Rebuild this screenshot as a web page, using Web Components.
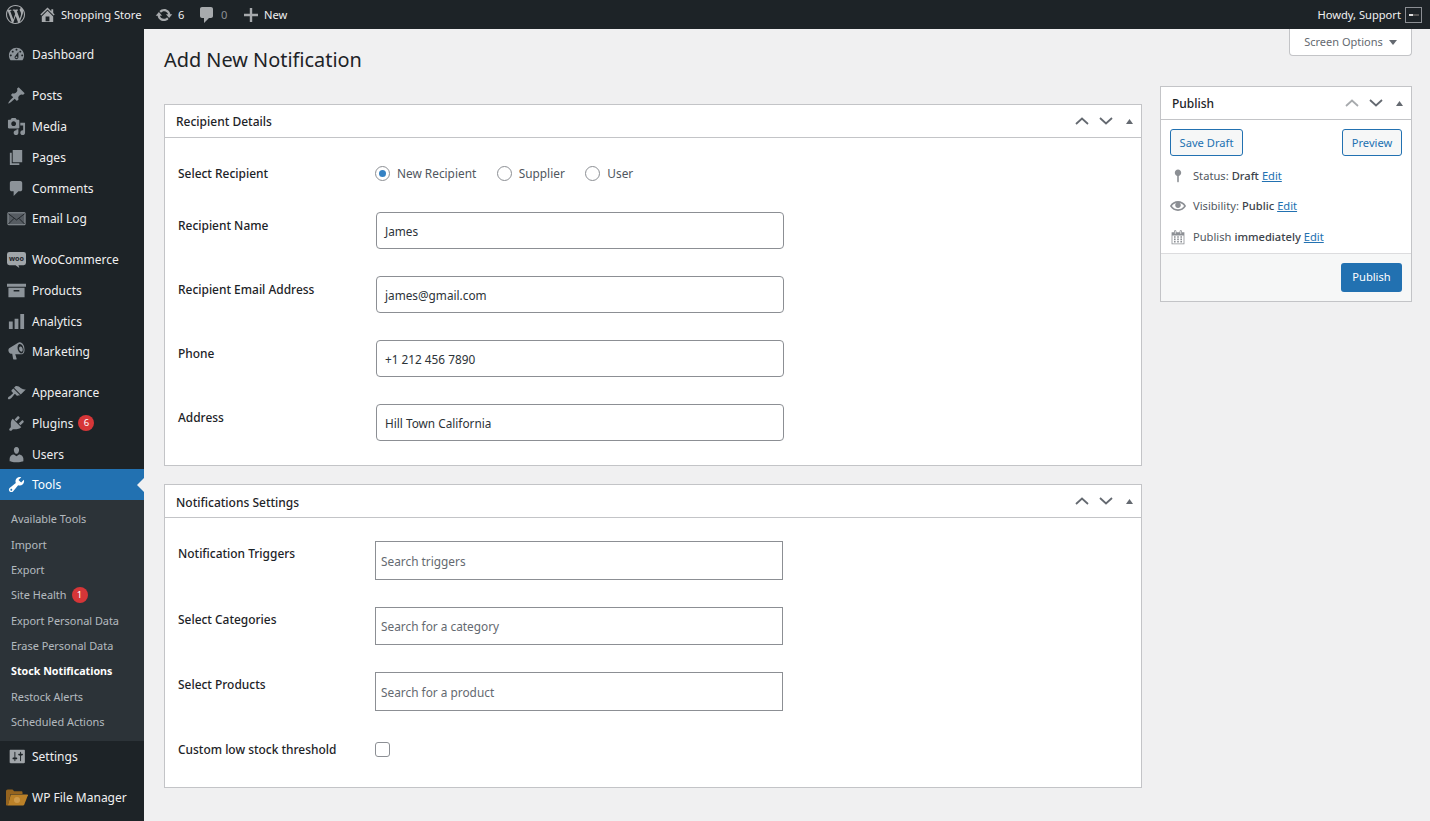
<!DOCTYPE html>
<html lang="en">
<head>
<meta charset="utf-8">
<title>Add New Notification</title>
<style>
  html, body { margin: 0; padding: 0; background: #f0f0f1; }
  body { font: 12px/18px "Noto Sans", "Open Sans", sans-serif; color: #1d2327; height: 821px; overflow: hidden; }
</style>
</head>
<body>
<wp-admin-shell>
  <wp-admin-bar slot="bar"></wp-admin-bar>
  <wp-side-menu slot="menu">
    <wp-menu-item icon="dashboard">Dashboard</wp-menu-item>
    <wp-menu-sep></wp-menu-sep>
    <wp-menu-item icon="post">Posts</wp-menu-item>
    <wp-menu-item icon="media">Media</wp-menu-item>
    <wp-menu-item icon="page">Pages</wp-menu-item>
    <wp-menu-item icon="comment">Comments</wp-menu-item>
    <wp-menu-item icon="email">Email Log</wp-menu-item>
    <wp-menu-sep></wp-menu-sep>
    <wp-menu-item icon="woo">WooCommerce</wp-menu-item>
    <wp-menu-item icon="archive">Products</wp-menu-item>
    <wp-menu-item icon="bars">Analytics</wp-menu-item>
    <wp-menu-item icon="megaphone">Marketing</wp-menu-item>
    <wp-menu-sep></wp-menu-sep>
    <wp-menu-item icon="brush">Appearance</wp-menu-item>
    <wp-menu-item icon="plugin" badge="6">Plugins</wp-menu-item>
    <wp-menu-item icon="users">Users</wp-menu-item>
    <wp-menu-item icon="wrench" current>Tools</wp-menu-item>
    <wp-sub-menu>
      <wp-sub-item>Available Tools</wp-sub-item>
      <wp-sub-item>Import</wp-sub-item>
      <wp-sub-item>Export</wp-sub-item>
      <wp-sub-item badge="1">Site Health</wp-sub-item>
      <wp-sub-item>Export Personal Data</wp-sub-item>
      <wp-sub-item>Erase Personal Data</wp-sub-item>
      <wp-sub-item current>Stock Notifications</wp-sub-item>
      <wp-sub-item>Restock Alerts</wp-sub-item>
      <wp-sub-item>Scheduled Actions</wp-sub-item>
    </wp-sub-menu>
    <wp-menu-item icon="settings">Settings</wp-menu-item>
    <wp-menu-sep></wp-menu-sep>
    <wp-menu-item icon="folder">WP File Manager</wp-menu-item>
  </wp-side-menu>

  <wp-page-title slot="title">Add New Notification</wp-page-title>

  <wp-meta-box slot="left" heading="Recipient Details" top="26" bottom="24">
    <wp-form-row label="Select Recipient" kind="radio">
      <wp-radio checked>New Recipient</wp-radio>
      <wp-radio>Supplier</wp-radio>
      <wp-radio>User</wp-radio>
    </wp-form-row>
    <wp-form-row label="Recipient Name"><wp-text-field>James</wp-text-field></wp-form-row>
    <wp-form-row label="Recipient Email Address"><wp-text-field>james@gmail.com</wp-text-field></wp-form-row>
    <wp-form-row label="Phone"><wp-text-field>+1 212 456 7890</wp-text-field></wp-form-row>
    <wp-form-row label="Address"><wp-text-field>Hill Town California</wp-text-field></wp-form-row>
  </wp-meta-box>

  <wp-meta-box slot="left" heading="Notifications Settings" top="23" bottom="28" lift="3">
    <wp-form-row label="Notification Triggers" kind="search"><wp-search-field>Search triggers</wp-search-field></wp-form-row>
    <wp-form-row label="Select Categories" kind="search"><wp-search-field>Search for a category</wp-search-field></wp-form-row>
    <wp-form-row label="Select Products" kind="search"><wp-search-field>Search for a product</wp-search-field></wp-form-row>
    <wp-form-row label="Custom low stock threshold" kind="check"><wp-check-box></wp-check-box></wp-form-row>
  </wp-meta-box>

  <wp-screen-options slot="right"></wp-screen-options>
  <wp-publish-box slot="right"></wp-publish-box>
</wp-admin-shell>

<script>
const ICONS = {
  logo: '<path d="M20 10c0-5.51-4.49-10-10-10C4.48 0 0 4.49 0 10c0 5.52 4.48 10 10 10 5.51 0 10-4.48 10-10zM7.78 15.37L4.37 6.22c.55-.02 1.17-.08 1.17-.08.5-.06.44-1.13-.06-1.11 0 0-1.45.11-2.37.11-.18 0-.37 0-.58-.01C4.12 2.69 6.87 1.11 10 1.11c2.33 0 4.45.87 6.05 2.34-.68-.11-1.65.39-1.65 1.58 0 .74.45 1.36.9 2.1.35.61.55 1.36.55 2.46 0 1.49-1.4 5-1.4 5l-3.03-8.37c.54-.02.82-.17.82-.17.5-.05.44-1.25-.06-1.22 0 0-1.44.12-2.38.12-.87 0-2.33-.12-2.33-.12-.5-.03-.56 1.2-.06 1.22l.92.08 1.26 3.41zM17.41 10c.24-.64.74-1.87.43-4.25.7 1.29 1.05 2.71 1.05 4.25 0 3.29-1.73 6.24-4.4 7.78.97-2.59 1.94-5.2 2.92-7.78zM6.1 18.09C3.12 16.65 1.11 13.53 1.11 10c0-1.3.23-2.48.72-3.59C3.25 10.3 4.67 14.2 6.1 18.09zm4.03-6.63l2.58 6.98c-.86.29-1.76.45-2.71.45-.79 0-1.57-.11-2.29-.33.81-2.38 1.62-4.74 2.42-7.1z"/>',
  home: '<path d="M16 8.5l1.53 1.53-1.06 1.06L10 4.62l-6.47 6.47-1.06-1.06L10 2.5l4 4v-2h2v4zm-6-2.46l6 5.99V18H4v-5.97zM12 17v-5H8v5h4z"/>',
  update: '<path d="M10.2 3.28c3.53 0 6.43 2.61 6.92 6h2.08l-3.5 4-3.5-4h2.32c-.45-1.97-2.21-3.45-4.32-3.45-1.45 0-2.73.71-3.54 1.78L4.95 5.66C6.23 4.2 8.11 3.28 10.2 3.28zm-.4 13.44c-3.52 0-6.43-2.61-6.92-6H.8l3.5-4c1.17 1.33 2.33 2.67 3.5 4H5.48c.45 1.97 2.21 3.45 4.32 3.45 1.45 0 2.73-.71 3.54-1.78l1.71 1.95c-1.28 1.46-3.15 2.38-5.25 2.38z"/>',
  plus: '<path d="M11.2 3v5.8H17v2.4h-5.8V17H8.8v-5.8H3V8.8h5.8V3z"/>',
  dashboard: '<path d="M3.76 16h12.48c1.1-1.37 1.76-3.11 1.76-5 0-4.42-3.58-8-8-8s-8 3.58-8 8c0 1.89.66 3.63 1.76 5zM10 4c.55 0 1 .45 1 1s-.45 1-1 1-1-.45-1-1 .45-1 1-1zM6 6c.55 0 1 .45 1 1s-.45 1-1 1-1-.45-1-1 .45-1 1-1zm8 0c.55 0 1 .45 1 1s-.45 1-1 1-1-.45-1-1 .45-1 1-1zm-5.37 5.55L12 7v6c0 1.1-.9 2-2 2s-2-.9-2-2c0-.57.24-1.08.63-1.45zM4 10c.55 0 1 .45 1 1s-.45 1-1 1-1-.45-1-1 .45-1 1-1zm12 0c.55 0 1 .45 1 1s-.45 1-1 1-1-.45-1-1 .45-1 1-1zm-5 3c0-.55-.45-1-1-1s-1 .45-1 1 .45 1 1 1 1-.45 1-1z"/>',
  post: '<path d="M10.44 3.02l1.82-1.82 6.36 6.35-1.83 1.82c-1.05-.68-2.48-.57-3.41.36l-.75.75c-.92.93-1.04 2.35-.35 3.41l-1.83 1.82-2.41-2.41-2.8 2.79c-.42.42-3.38 2.71-3.8 2.29s1.86-3.39 2.28-3.81l2.79-2.79L4.1 9.36l1.83-1.82c1.05.69 2.48.57 3.4-.36l.75-.75c.93-.92 1.05-2.35.36-3.41z"/>',
  media: '<path d="M13 11V4c0-.55-.45-1-1-1h-1.67L9 1H5L3.67 3H2c-.55 0-1 .45-1 1v7c0 .55.45 1 1 1h10c.55 0 1-.45 1-1zM7 4.5c1.38 0 2.5 1.12 2.5 2.5S8.38 9.5 7 9.5 4.5 8.38 4.5 7 5.62 4.5 7 4.5zM14 6h5v10.5c0 1.38-1.12 2.5-2.5 2.5S14 17.88 14 16.5s1.12-2.5 2.5-2.5c.17 0 .34.02.5.05V9h-3V6zm-4 8.05V13h2v3.5c0 1.38-1.12 2.5-2.5 2.5S7 17.88 7 16.5 8.12 14 9.5 14c.17 0 .34.02.5.05z"/>',
  page: '<path d="M6 15V2h10v13H6zm-1 1h8v2H3V5h2v11z"/>',
  comment: '<path d="M5 2h9c1.1 0 2 .9 2 2v7c0 1.1-.9 2-2 2h-2l-5 5v-5H5c-1.1 0-2-.9-2-2V4c0-1.1.9-2 2-2z"/>',
  email: '<rect x="1" y="4" width="18" height="12.500" rx=".8" fill="#565c62" stroke="#8f959a" stroke-width="1.100"/><path d="M1.500 5l8.500 6.500L18.500 5M1.500 15.800L7.500 9.800M18.500 15.800L12.500 9.800" fill="none" stroke="#1d2327" stroke-width="1"/>',
  woo: '<path fill="#a0a5a9" d="M2.500 2h15A2.500 2.500 0 0 1 20 4.500v9a2.500 2.500 0 0 1-2.500 2.500H12l1 3-4-3H2.500A2.500 2.500 0 0 1 0 13.500v-9A2.500 2.500 0 0 1 2.500 2z"/><text x="10" y="11.500" text-anchor="middle" font-family="Noto Sans, sans-serif" font-size="7.500" font-weight="700" fill="#1d2327">woo</text>',
  archive: '<path fill-rule="evenodd" d="M0 3h20v3H0zM1.500 7h17v10h-17zM7 9.500V11h6V9.500z"/>',
  bars: '<path d="M18 18V2h-4v16h4zm-6 0V7H8v11h4zm-6 0v-8H2v8h4z"/>',
  megaphone: '<path d="M18.150 5.940c.46 1.620.38 3.220-.02 4.480-.42 1.280-1.260 2.180-2.300 2.480-.16.06-.26.06-.4.06-.06.02-.12.02-.18.02-.06.02-.14.02-.22.02H8.700l1.500 4.800c.02.14-.06.26-.14.34-.08.1-.24.16-.34.16H6.950c-.1 0-.26-.06-.34-.16-.08-.08-.16-.2-.14-.34l-1-5.500H4.250l-.02-.02c-.5.06-1.080-.18-1.540-.62s-.88-1.080-1.060-1.880c-.24-.8-.2-1.560-.02-2.200.18-.62.58-1.080 1.060-1.300l.02-.02 9-5.400c.1-.06.18-.1.24-.16.06-.04.14-.08.24-.12.16-.08.28-.12.5-.18 1.040-.3 2.240.1 3.220 1 .98.880 1.800 2.240 2.260 3.860zm-2.580 5.980c.4-.1.740-.34 1.040-.7.58-.7.860-1.760.860-3.040-.02-.64-.1-1.300-.28-1.980-.34-1.360-1.020-2.500-1.780-3.240s-1.680-1.100-2.460-.88c-.38.12-.72.34-1.020.7-.58.7-.84 1.760-.82 3.040.02.64.1 1.300.26 1.980.36 1.340 1.040 2.500 1.800 3.240.78.74 1.620 1.100 2.400.88zm-.38-1.780c-.32.08-.64-.1-.98-.34-.5-.34-.98-.98-1.260-1.760-.28-.78-.3-1.540-.14-2.140.18-.6.54-1.020 1.060-1.160.52-.14 1.040.06 1.520.48.46.42.84 1.060 1.040 1.820.2.780.2 1.540-.02 2.120-.22.58-.7.980-1.220.980z"/>',
  brush: '<path d="M14.480 11.060L7.410 3.990l1.500-1.500c.5-.56 2.300-.47 3.510.32 1.210.8 1.430 1.280 2.910 2.100 1.180.64 2.450 1.260 4.450.85zm-.71.71L6.700 4.700 4.930 6.470c-.39.39-.39 1.020 0 1.410l1.060 1.060c.39.39.39 1.030 0 1.420-.6.6-1.430 1.110-2.210 1.690-.35.26-.7.530-1.010.84C1.430 13.230.4 14.980 1.200 15.800c.8.820 2.570-.24 3.910-1.580.31-.31.58-.66.84-1.010.58-.78 1.090-1.610 1.690-2.210.39-.39 1.020-.39 1.410 0l1.060 1.060c.39.39 1.020.39 1.410 0z" transform="translate(0 1)"/>',
  plugin: '<path d="M13.110 4.360L9.870 7.600 8 5.730l3.240-3.240c.35-.34 1.050-.2 1.560.32.52.51.66 1.210.31 1.550zm-8 1.770l.91-1.120 9.010 9.010-1.190.84c-.71.71-2.630 1.160-3.820 1.160H6.140L4.900 17.260c-.59.59-1.540.59-2.120 0-.59-.58-.59-1.530 0-2.120l1.240-1.240v-3.880c0-1.130.4-3.190 1.090-3.890zm7.260 3.970l3.240-3.240c.34-.35 1.040-.21 1.550.31.52.51.66 1.210.31 1.550l-3.240 3.250z"/>',
  users: '<path d="M10 9.250c-2.270 0-2.730-3.440-2.730-3.440C7 4.020 7.820 2 9.970 2c2.160 0 2.980 2.020 2.710 3.810 0 0-.41 3.440-2.68 3.440zm0 2.570L12.720 10c2.390 0 4.520 2.330 4.520 4.530v2.490s-3.650 1.130-7.240 1.130c-3.650 0-7.240-1.130-7.240-1.130v-2.490c0-2.250 1.940-4.480 4.470-4.480z"/>',
  wrench: '<path d="M16.680 9.770c-1.340 1.340-3.300 1.670-4.950.99l-5.410 6.520c-.99.99-2.590.99-3.580 0s-.99-2.590 0-3.570l6.520-5.420c-.68-1.650-.35-3.610.99-4.950 1.280-1.280 3.120-1.620 4.720-1.060l-2.890 2.890 2.820 2.820 2.860-2.870c.53 1.580.18 3.390-1.080 4.650zM3.810 16.210c.4.39 1.040.39 1.430 0 .4-.4.4-1.040 0-1.430-.39-.4-1.030-.4-1.430 0-.39.39-.39 1.030 0 1.430z"/>',
  settings: '<path fill="#a0a5a9" d="M18 16V4c0-.55-.45-1-1-1H3c-.55 0-1 .45-1 1v12c0 .55.45 1 1 1h14c.55 0 1-.45 1-1zM8 11h1c.55 0 1 .45 1 1s-.45 1-1 1H8v1.500c0 .28-.22.5-.5.5s-.5-.22-.5-.5V13H6c-.55 0-1-.45-1-1s.45-1 1-1h1V5.500c0-.28.22-.5.5-.5s.5.22.5.5V11zm5-2h-1c-.55 0-1-.45-1-1s.45-1 1-1h1V5.500c0-.28.22-.5.5-.5s.5.22.5.5V7h1c.55 0 1 .45 1 1s-.45 1-1 1h-1v5.500c0 .28-.22.5-.5.5s-.5-.22-.5-.5V9z" transform="translate(.8 0)"/>',
  status: '<path d="M14 6c0 1.860-1.280 3.410-3 3.860V17c0 .55-.45 1-1 1s-1-.45-1-1V9.860C7.280 9.410 6 7.860 6 6c0-2.210 1.790-4 4-4s4 1.790 4 4z"/>',
  eye: '<path d="M19.700 9.400C17.700 6 14 3.900 10 3.900S2.300 6 .3 9.400L0 10l.3.6c2 3.400 5.700 5.500 9.700 5.500s7.700-2.100 9.700-5.500l.3-.6-.3-.6zM10 14.100c-3.100 0-6-1.600-7.700-4.100C3.600 8 5.700 6.600 8 6.100c-.9.6-1.500 1.700-1.500 2.900 0 1.900 1.600 3.500 3.500 3.500s3.500-1.600 3.500-3.500c0-1.200-.6-2.300-1.500-2.900 2.300.5 4.400 1.900 5.700 3.900-1.700 2.500-4.600 4.100-7.700 4.100z"/>',
  calendar: '<path d="M15 4h3v15H2V4h3V3c0-.41.15-.76.44-1.060.29-.29.65-.44 1.060-.44s.77.15 1.060.44c.29.3.44.65.44 1.060v1h4V3c0-.41.15-.76.44-1.060.29-.29.65-.44 1.060-.44s.77.15 1.060.44c.29.3.44.65.44 1.060v1zM6 3v2.500c0 .14.05.26.15.36.09.09.21.14.35.14s.26-.05.35-.14c.1-.1.15-.22.15-.36V3c0-.14-.05-.26-.15-.35-.09-.1-.21-.15-.35-.15s-.26.05-.35.15c-.1.09-.15.21-.15.35zm7 0v2.500c0 .14.05.26.14.36.1.09.22.14.36.14s.26-.05.36-.14c.09-.1.14-.22.14-.36V3c0-.14-.05-.26-.14-.35-.1-.1-.22-.15-.36-.15s-.26.05-.36.15c-.09.09-.14.21-.14.35zm4 15V8H3v10h14zM7 9v2H5V9h2zm2 0h2v2H9V9zm4 2V9h2v2h-2zm-6 1v2H5v-2h2zm2 0h2v2H9v-2zm4 2v-2h2v2h-2zm-6 1v2H5v-2h2zm4 2H9v-2h2v2zm4 0h-2v-2h2v2z"/>'
};

function icon(name, size, fill) {
  return `<svg xmlns="http://www.w3.org/2000/svg" width="${size}" height="${size}" viewBox="0 0 20 20" fill="${fill || "currentColor"}" style="display:block;flex:none">${ICONS[name]}</svg>`;
}

// orange folder with a faint logo, this one is not a dashicon
const FOLDER = `<svg xmlns="http://www.w3.org/2000/svg" width="22" height="17" viewBox="0 0 22 17" style="display:block;flex:none">
  <path d="M0 2.500C0 1.400.7.600 1.800.600h4.700l1.700 1.700h7c.8 0 1.300.5 1.300 1.300V5H4.600L2 16.500H1C.4 16.500 0 16 0 15.400z" fill="#95641f"/>
  <path d="M4.800 5.400H21.300c.5 0 .7.400.6.800l-3.700 9.500c-.2.500-.6.800-1.100.8H1.800z" fill="#bb8128"/>
  <circle cx="11" cy="11" r="3" fill="#d9a75c" opacity=".65"/>
</svg>`;

function shadow(el, html) {
  el.attachShadow({ mode: "open" }).innerHTML = html;
}

class WpAdminShell extends HTMLElement {
  constructor() {
    super();
    shadow(this, `
      <style>
        :host { display: grid; grid-template-columns: 144px 1fr; grid-template-rows: 29px 1fr; height: 821px; }
        .bar { grid-column: 1 / 3; }
        main { display: grid; grid-template-columns: 978px 252px; column-gap: 18px; padding-left: 20px; align-items: start; }
        .left { display: flex; flex-direction: column; }
        .right { display: flex; flex-direction: column; }
      </style>
      <div class="bar"><slot name="bar"></slot></div>
      <slot name="menu"></slot>
      <main>
        <div class="left"><slot name="title"></slot><slot name="left"></slot></div>
        <div class="right"><slot name="right"></slot></div>
      </main>`);
  }
}

class WpAdminBar extends HTMLElement {
  constructor() {
    super();
    shadow(this, `
      <style>
        :host { display: flex; align-items: center; height: 29px; background: #1d2327; color: #f0f0f1; font-size: 11.150px; white-space: nowrap; }
        span { padding-top: 1px; }
        .ic { color: #a7aaad; padding-top: 0; }
        .logo { margin-left: 6px; }
        .home { margin-left: 13px; }
        .site { margin-left: 4px; width: 81px; }
        .upd { margin-left: 13px; }
        .n { margin-left: 5px; width: 7px; }
        .cm { margin-left: 12px; }
        .zero { margin-left: 4px; width: 7px; color: #8c8f94; }
        .pl { margin-left: 13px; }
        .new { margin-left: 3px; }
        .howdy { margin-left: auto; margin-right: 4px; }
        .avatar { width: 15px; height: 14px; padding: 0; border: 1px solid #8c8f94; background: #1d2327; margin-right: 8px; display: flex; align-items: center; justify-content: center; }
        .avatar i { display: block; width: 10px; height: 2px; background: linear-gradient(90deg, #ddd 40%, #555 40%); }
      </style>
      <span class="ic logo">${icon("logo", 19)}</span>
      <span class="ic home">${icon("home", 19)}</span>
      <span class="site">Shopping Store</span>
      <span class="ic upd">${icon("update", 18)}</span>
      <span class="n">6</span>
      <span class="ic cm">${icon("comment", 20)}</span>
      <span class="zero">0</span>
      <span class="ic pl">${icon("plus", 20)}</span>
      <span class="new">New</span>
      <span class="howdy">Howdy, Support</span>
      <span class="avatar"><i></i></span>`);
  }
}

class WpSideMenu extends HTMLElement {
  constructor() {
    super();
    shadow(this, `
      <style>
        :host { display: flex; flex-direction: column; background: #1d2327; padding-top: 10.65px; height: 781px; overflow: hidden; }
      </style>
      <slot></slot>`);
  }
}

class WpMenuSep extends HTMLElement {
  constructor() {
    super();
    shadow(this, `<style>:host { display: block; height: 10.3px; flex: none; }</style>`);
  }
}

class WpMenuItem extends HTMLElement {
  constructor() {
    super();
    const name = this.getAttribute("icon");
    const glyph = name === "folder" ? FOLDER : icon(name, 19);
    const badge = this.getAttribute("badge");
    shadow(this, `
      <style>
        :host { display: flex; align-items: center; height: 30.7px; flex: none; color: #f0f0f1; font-size: 12px; white-space: nowrap; position: relative; }
        :host([current]) { background: #2271b1; color: #fff; }
        .ic { width: 32px; display: flex; justify-content: center; color: #8c9399; box-sizing: border-box; }
        :host([icon="folder"]) .ic { justify-content: flex-start; padding-left: 6px; }
        :host([current]) .ic { color: #fff; }
        .txt { padding-top: 1px; }
        .badge { width: 16px; height: 16px; border-radius: 50%; background: #d63638; color: #fff; font-size: 9.500px; line-height: 16px; text-align: center; margin-left: 5px; }
        :host([current])::after { content: ""; position: absolute; right: 0; top: 50%; margin-top: -7px; border: 7px solid transparent; border-right-color: #f0f0f1; border-left-width: 0; }
      </style>
      <span class="ic">${glyph}</span><span class="txt"><slot></slot></span>${badge ? `<span class="badge">${badge}</span>` : ""}`);
  }
}

class WpSubMenu extends HTMLElement {
  constructor() {
    super();
    shadow(this, `
      <style>:host { display: flex; flex-direction: column; flex: none; background: #2c3338; padding: 6.500px 0 6.500px; }</style>
      <slot></slot>`);
  }
}

class WpSubItem extends HTMLElement {
  constructor() {
    super();
    const badge = this.getAttribute("badge");
    shadow(this, `
      <style>
        :host { display: flex; align-items: center; height: 25.350px; padding-left: 11px; font-size: 10.900px; color: rgba(240,246,252,.7); white-space: nowrap; }
        :host([current]) { color: #fff; font-weight: 700; font-size: 10.700px; }
        .badge { width: 16px; height: 16px; border-radius: 50%; background: #d63638; color: #fff; font-size: 9.500px; line-height: 16px; text-align: center; margin-left: 5px; }
      </style>
      <slot></slot>${badge ? `<span class="badge">${badge}</span>` : ""}`);
  }
}

class WpPageTitle extends HTMLElement {
  constructor() {
    super();
    shadow(this, `
      <style>:host { display: block; font-size: 19.900px; line-height: 28px; color: #1d2327; padding: 17px 0 30px; white-space: nowrap; }</style>
      <slot></slot>`);
  }
}

const CHEVRONS = (dim) => `
  <svg width="14" height="8" viewBox="0 0 14 8" style="margin-right:10px"><path d="M1 7l6-5.500 6 5.500" fill="none" stroke="${dim ? "#a7aaad" : "#646970"}" stroke-width="1.800"/></svg>
  <svg width="14" height="8" viewBox="0 0 14 8" style="margin-right:13px"><path d="M1 1l6 5.500 6-5.500" fill="none" stroke="#646970" stroke-width="1.800"/></svg>
  <svg width="7" height="5" viewBox="0 0 7 5"><path d="M3.500 0L7 5H0z" fill="#646970"/></svg>`;

class WpMetaBox extends HTMLElement {
  constructor() {
    super();
    const top = this.getAttribute("top");
    const bottom = this.getAttribute("bottom");
    const lift = this.getAttribute("lift") || 2;
    shadow(this, `
      <style>
        :host { display: block; background: #fff; border: 1px solid #c3c4c7; margin-bottom: 18px; }
        header { display: flex; align-items: center; height: 32px; border-bottom: 1px solid #c3c4c7; padding: 0 8px 0 11px; font-size: 12px; font-weight: 500; color: #1d2327; }
        h2 { flex: 1; margin: 0; font: inherit; padding-top: ${lift}px; }
        .body { padding: ${top}px 0 ${bottom}px 13px; display: flex; flex-direction: column; }
      </style>
      <header><h2>${this.getAttribute("heading")}</h2>${CHEVRONS(false)}</header>
      <div class="body"><slot></slot></div>`);
  }
}

class WpFormRow extends HTMLElement {
  constructor() {
    super();
    shadow(this, `
      <style>
        :host { display: grid; grid-template-columns: 198px 408px; margin-bottom: 27px; align-items: start; font-size: 11.950px; }
        :host(:last-child) { margin-bottom: 0; }
        label { padding-top: 5px; font-weight: 500; white-space: nowrap; color: #1d2327; }
        :host([kind="radio"]) { margin-bottom: 30px; align-items: center; }
        :host([kind="radio"]) label { padding-top: 1px; line-height: 17px; }
        :host([kind="search"]) { grid-template-columns: 197px 408px; }
        :host([kind="search"]) label { padding-top: 4px; }
        :host([kind="check"]) { grid-template-columns: 197px 408px; margin-top: 3px; }
        :host([kind="check"]) label { padding-top: 0; }
        .ctl { display: flex; }
        :host([kind="check"]) .ctl { padding-top: 1px; }
      </style>
      <label>${this.getAttribute("label")}</label>
      <div class="ctl"><slot></slot></div>`);
  }
}

class WpRadio extends HTMLElement {
  constructor() {
    super();
    shadow(this, `
      <style>
        :host { display: inline-flex; align-items: center; height: 18px; margin-right: 20.500px; color: #50575e; font-size: 11.850px; white-space: nowrap; }
        i { display: block; width: 13px; height: 13px; border: 1px solid #8c8f94; border-radius: 50%; margin-right: 7px; position: relative; background: #fff; }
        :host(:first-child) i { margin-left: -1px; }
        :host([checked]) i::after { content: ""; position: absolute; left: 3px; top: 3px; width: 7px; height: 7px; border-radius: 50%; background: #3582c4; }
      </style>
      <i></i><span><slot></slot></span>`);
  }
}

class WpTextField extends HTMLElement {
  constructor() {
    super();
    shadow(this, `
      <style>
        :host { display: flex; align-items: center; box-sizing: border-box; width: 408px; height: 37px; border: 1px solid #8c8f94; border-radius: 4px; background: #fff; padding-left: 8px; padding-top: 1.500px; color: #2c3338; font-size: 11.800px; }
      </style>
      <slot></slot>`);
  }
}

class WpSearchField extends HTMLElement {
  constructor() {
    super();
    shadow(this, `
      <style>
        :host { display: flex; align-items: center; box-sizing: border-box; width: 408px; height: 38.500px; border: 1px solid #8c8f94; background: #fff; padding-left: 5px; padding-top: 1px; color: #646970; font-size: 11.850px; }
      </style>
      <slot></slot>`);
  }
}

class WpCheckBox extends HTMLElement {
  constructor() {
    super();
    shadow(this, `
      <style>:host { display: block; box-sizing: border-box; width: 15px; height: 15px; border: 1px solid #8c8f94; border-radius: 3px; background: #fff; }</style>`);
  }
}

class WpScreenOptions extends HTMLElement {
  constructor() {
    super();
    shadow(this, `
      <style>
        :host { display: flex; align-items: center; justify-content: center; align-self: flex-end; box-sizing: border-box; width: 123px; height: 27px; margin-bottom: 30px; background: #fff; border: 1px solid #c3c4c7; border-top: 0; border-radius: 0 0 4px 4px; color: #646970; font-size: 11px; white-space: nowrap; }
        svg { margin-left: 6px; }
      </style>
      Screen Options<svg width="8" height="5" viewBox="0 0 8 5"><path d="M0 0h8L4 5z" fill="#646970"/></svg>`);
  }
}

class WpPublishBox extends HTMLElement {
  constructor() {
    super();
    shadow(this, `
      <style>
        :host { display: block; background: #fff; border: 1px solid #c3c4c7; font-size: 11.150px; color: #50575e; }
        header { display: flex; align-items: center; height: 32px; border-bottom: 1px solid #c3c4c7; padding: 0 8px 0 11px; font-size: 12px; font-weight: 500; color: #1d2327; }
        h2 { flex: 1; margin: 0; font: inherit; padding-top: 2px; }
        .acts { display: flex; justify-content: space-between; padding: 9px 9px 4px; }
        .btn { display: flex; align-items: center; justify-content: center; box-sizing: border-box; height: 27px; border: 1px solid #2271b1; border-radius: 3px; background: #f6f7f7; color: #2271b1; }
        .rows { padding: .3px 0 1.200px 9px; }
        .row { display: flex; align-items: center; height: 30.500px; white-space: nowrap; }
        .row .ic { width: 23px; color: #8c8f94; display: flex; }
        .row a { color: #2271b1; text-decoration: underline; margin-left: 3px; }
        b { font-weight: 500; color: #3c434a; margin-left: 3px; }
        footer { background: #f6f7f7; border-top: 1px solid #dcdcde; padding: 9px 9px 9px; display: flex; justify-content: flex-end; }
        .primary { display: flex; align-items: center; justify-content: center; width: 61px; height: 29px; background: #2271b1; color: #fff; border-radius: 3px; }
      </style>
      <header><h2>Publish</h2>${CHEVRONS(true)}</header>
      <div class="acts">
        <span class="btn" style="width:73px">Save Draft</span>
        <span class="btn" style="width:60px">Preview</span>
      </div>
      <div class="rows">
        <div class="row"><span class="ic">${icon("status", 16)}</span>Status:<b>Draft</b><a>Edit</a></div>
        <div class="row"><span class="ic">${icon("eye", 16)}</span>Visibility:<b>Public</b><a>Edit</a></div>
        <div class="row"><span class="ic">${icon("calendar", 16)}</span>Publish<b>immediately</b><a>Edit</a></div>
      </div>
      <footer><span class="primary">Publish</span></footer>`);
  }
}

customElements.define("wp-admin-shell", WpAdminShell);
customElements.define("wp-admin-bar", WpAdminBar);
customElements.define("wp-side-menu", WpSideMenu);
customElements.define("wp-menu-sep", WpMenuSep);
customElements.define("wp-menu-item", WpMenuItem);
customElements.define("wp-sub-menu", WpSubMenu);
customElements.define("wp-sub-item", WpSubItem);
customElements.define("wp-page-title", WpPageTitle);
customElements.define("wp-meta-box", WpMetaBox);
customElements.define("wp-form-row", WpFormRow);
customElements.define("wp-radio", WpRadio);
customElements.define("wp-text-field", WpTextField);
customElements.define("wp-search-field", WpSearchField);
customElements.define("wp-check-box", WpCheckBox);
customElements.define("wp-screen-options", WpScreenOptions);
customElements.define("wp-publish-box", WpPublishBox);
</script>
</body>
</html>
